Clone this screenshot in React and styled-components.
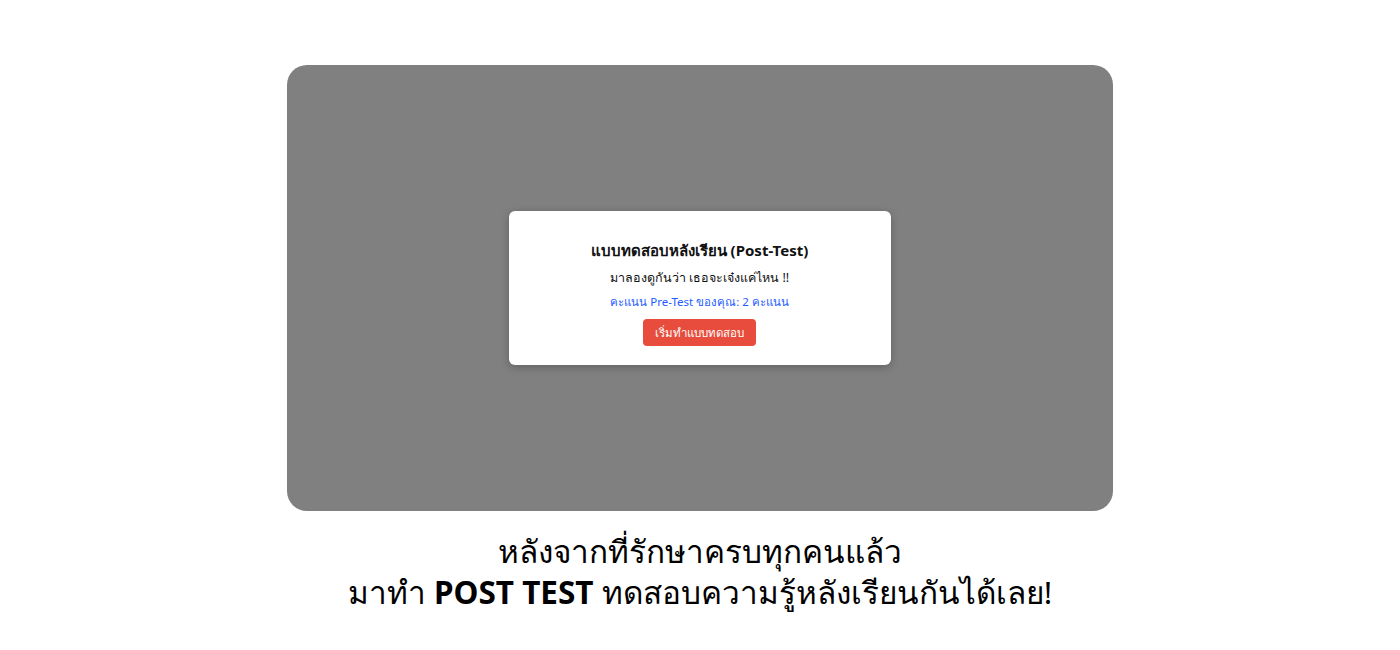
import styled, { createGlobalStyle } from 'styled-components';

const GlobalStyle = createGlobalStyle`
  html, body {
    margin: 0;
    padding: 0;
    background: #ffffff;
    font-family: "Noto Sans", "Open Sans", sans-serif;
  }
`;

const Page = styled.div`
  width: 1400px;
  height: 650px;
  display: flex;
  flex-direction: column;
  align-items: center;
  padding-top: 65px;
  box-sizing: border-box;
`;

const Stage = styled.div`
  width: 826px;
  height: 446px;
  background: #808080;
  border-radius: 20px;
  display: flex;
  align-items: center;
  justify-content: center;
`;

const Modal = styled.div`
  width: 382px;
  height: 154px;
  margin-right: 1px;
  box-sizing: border-box;
  background: #ffffff;
  border-radius: 6px;
  box-shadow: 0 2px 8px rgba(0, 0, 0, 0.25);
  display: flex;
  flex-direction: column;
  align-items: center;
  padding-top: 28px;
`;

const Title = styled.h2`
  margin: 0;
  font-size: 15px;
  font-weight: 700;
  color: #111;
  line-height: 22px;
`;

const Subtitle = styled.p`
  margin: 8px 0 0;
  font-size: 12.5px;
  color: #111;
  line-height: 18px;
`;

const Score = styled.p`
  margin: 6px 0 0;
  font-size: 11.5px;
  color: #1e5bff;
  line-height: 18px;
`;

const StartButton = styled.button`
  margin-top: 8px;
  width: 113px;
  height: 27px;
  border: none;
  border-radius: 4px;
  background: #e74c3c;
  color: #fff;
  font-family: inherit;
  font-size: 11.5px;
  cursor: pointer;
`;

const Caption = styled.div`
  margin-top: 19px;
  text-align: center;
  font-size: 31.5px;
  line-height: 41px;
  color: #000;

  b {
    font-weight: 700;
  }
`;

export default function App() {
  return (
    <>
      <GlobalStyle />
      <Page>
        <Stage>
          <Modal>
            <Title>แบบทดสอบหลังเรียน (Post-Test)</Title>
            <Subtitle>มาลองดูกันว่า เธอจะเจ๋งแค่ไหน !!</Subtitle>
            <Score>คะแนน Pre-Test ของคุณ: 2 คะแนน</Score>
            <StartButton>เริ่มทำแบบทดสอบ</StartButton>
          </Modal>
        </Stage>
        <Caption>
          หลังจากที่รักษาครบทุกคนแล้ว
          <br />
          มาทำ <b>POST TEST</b> ทดสอบความรู้หลังเรียนกันได้เลย!
        </Caption>
      </Page>
    </>
  );
}
